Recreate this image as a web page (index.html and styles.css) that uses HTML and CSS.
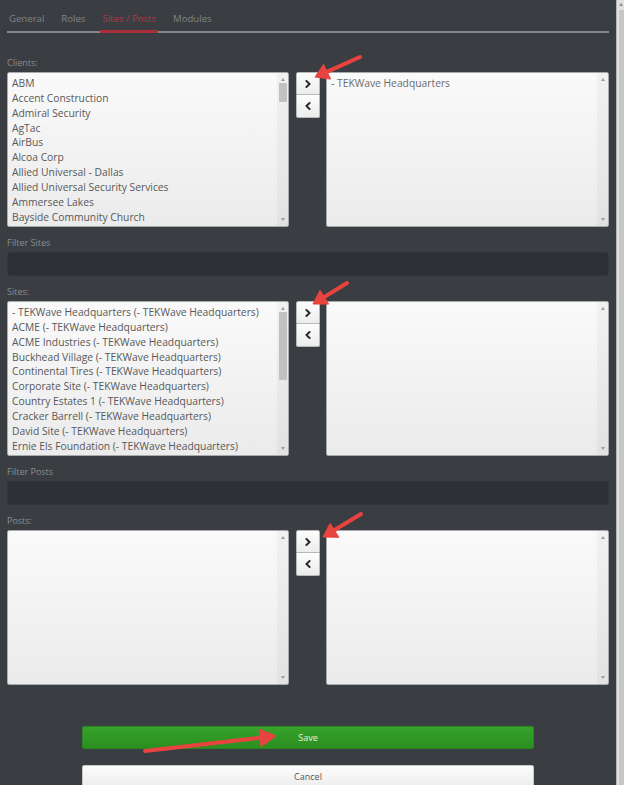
FILE: index.html
```html
<!DOCTYPE html>
<html lang="en">
<head>
<meta charset="utf-8">
<title>User — Sites / Posts</title>
<link rel="stylesheet" href="styles.css">
</head>
<body>
<div class="window">
  <main class="panel">
    <nav class="tabs">
      <a class="tab">General</a>
      <a class="tab">Roles</a>
      <a class="tab active">Sites / Posts</a>
      <a class="tab">Modules</a>
    </nav>

    <section class="picker first">
      <label class="field-label">Clients:</label>
      <div class="dual">
        <div class="listbox">
          <ul class="options">
            <li>ABM</li>
            <li>Accent Construction</li>
            <li>Admiral Security</li>
            <li>AgTac</li>
            <li>AirBus</li>
            <li>Alcoa Corp</li>
            <li>Allied Universal - Dallas</li>
            <li>Allied Universal Security Services</li>
            <li>Ammersee Lakes</li>
            <li>Bayside Community Church</li>
          </ul>
          <div class="vscroll"><span class="arr up"></span><span class="track"><span class="thumb thumb-clients"></span></span><span class="arr down"></span></div>
        </div>
        <div class="movers">
          <button class="mover"><svg width="6" height="8" viewBox="0 0 6 8"><path d="M1.4 1 L4.6 4 L1.4 7" /></svg></button>
          <button class="mover"><svg width="6" height="8" viewBox="0 0 6 8"><path d="M4.6 1 L1.4 4 L4.6 7" /></svg></button>
        </div>
        <div class="listbox">
          <ul class="options selected">
            <li>- TEKWave Headquarters</li>
          </ul>
          <div class="vscroll"><span class="arr up"></span><span class="track"></span><span class="arr down"></span></div>
        </div>
      </div>
    </section>

    <div class="filter">
      <label class="field-label">Filter Sites</label>
      <input class="filter-input" type="text">
    </div>

    <section class="picker">
      <label class="field-label">Sites:</label>
      <div class="dual">
        <div class="listbox">
          <ul class="options">
            <li>- TEKWave Headquarters (- TEKWave Headquarters)</li>
            <li>ACME (- TEKWave Headquarters)</li>
            <li>ACME Industries (- TEKWave Headquarters)</li>
            <li>Buckhead Village (- TEKWave Headquarters)</li>
            <li>Continental Tires (- TEKWave Headquarters)</li>
            <li>Corporate Site (- TEKWave Headquarters)</li>
            <li>Country Estates 1 (- TEKWave Headquarters)</li>
            <li>Cracker Barrell (- TEKWave Headquarters)</li>
            <li>David Site (- TEKWave Headquarters)</li>
            <li>Ernie Els Foundation (- TEKWave Headquarters)</li>
          </ul>
          <div class="vscroll"><span class="arr up"></span><span class="track"><span class="thumb thumb-sites"></span></span><span class="arr down"></span></div>
        </div>
        <div class="movers">
          <button class="mover"><svg width="6" height="8" viewBox="0 0 6 8"><path d="M1.4 1 L4.6 4 L1.4 7" /></svg></button>
          <button class="mover"><svg width="6" height="8" viewBox="0 0 6 8"><path d="M4.6 1 L1.4 4 L4.6 7" /></svg></button>
        </div>
        <div class="listbox">
          <ul class="options"></ul>
          <div class="vscroll"><span class="arr up"></span><span class="track"></span><span class="arr down"></span></div>
        </div>
      </div>
    </section>

    <div class="filter">
      <label class="field-label">Filter Posts</label>
      <input class="filter-input" type="text">
    </div>

    <section class="picker">
      <label class="field-label">Posts:</label>
      <div class="dual">
        <div class="listbox">
          <ul class="options"></ul>
          <div class="vscroll"><span class="arr up"></span><span class="track"></span><span class="arr down"></span></div>
        </div>
        <div class="movers">
          <button class="mover"><svg width="6" height="8" viewBox="0 0 6 8"><path d="M1.4 1 L4.6 4 L1.4 7" /></svg></button>
          <button class="mover"><svg width="6" height="8" viewBox="0 0 6 8"><path d="M4.6 1 L1.4 4 L4.6 7" /></svg></button>
        </div>
        <div class="listbox">
          <ul class="options"></ul>
          <div class="vscroll"><span class="arr up"></span><span class="track"></span><span class="arr down"></span></div>
        </div>
      </div>
    </section>

    <div class="actions">
      <button class="btn save">Save</button>
      <button class="btn cancel">Cancel</button>
    </div>
  </main>

  <div class="page-scroll"><span class="arr up"></span><span class="page-thumb"></span></div>
</div>

<!-- red call-out arrows drawn over the form -->
<svg class="callouts" width="624" height="785" viewBox="0 0 624 785">
  <g class="callout">
    <line x1="360" y1="57" x2="328" y2="71.3"/>
    <polygon points="315,77 330.6,79.1 323.6,64.3"/>
  </g>
  <g class="callout">
    <line x1="347" y1="283" x2="325" y2="296.6"/>
    <polygon points="313,304 328.6,304.1 320,290.2"/>
  </g>
  <g class="callout">
    <line x1="361" y1="514" x2="335" y2="529.7"/>
    <polygon points="323,537 338.8,537.3 330.1,523.3"/>
  </g>
  <g class="callout">
    <line x1="145" y1="751" x2="262" y2="737.6"/>
    <polygon points="276,736 261.1,746.7 259.1,728.9"/>
  </g>
</svg>
</body>
</html>
```

FILE: styles.css
```css
* {
  box-sizing: border-box;
  margin: 0;
  padding: 0;
}

html,
body {
  width: 624px;
  height: 785px;
  overflow: hidden;
}

body {
  position: relative;
  background: #3a3e42;
  font-family: "Open Sans", "Liberation Sans", sans-serif;
  color: #555;
}

.window {
  display: flex;
  height: 785px;
}

.panel {
  flex: 1;
  padding: 0 7px;
}

/* tab strip */
.tabs {
  display: flex;
  gap: 13px;
  padding-top: 12px;
  border-bottom: 2px solid #85888a;
}

.tab {
  font-size: 9.6px;
  line-height: 14px;
  padding: 0 2px 4px;
  margin-bottom: -2px;
  color: #808386;
  border-bottom: 3px solid transparent;
}

.tab.active {
  color: #b43843;
  border-bottom-color: #a93039;
}

/* labels */
.field-label {
  display: block;
  font-size: 9px;
  line-height: 12px;
  color: #8a8d90;
  margin-bottom: 3px;
}

.picker {
  margin-top: 10px;
}

.picker.first {
  margin-top: 24px;
}

.filter {
  margin-top: 10px;
}

.filter-input {
  display: block;
  width: 100%;
  height: 24px;
  background: #2d3034;
  border: 1px solid #313538;
  border-radius: 3px;
  outline: none;
}

/* dual list boxes */
.dual {
  display: grid;
  grid-template-columns: 282px 24px 1fr;
  column-gap: 6.5px;
  align-items: start;
}

.listbox {
  display: flex;
  height: 155px;
  border: 1px solid #a7a9ab;
  border-radius: 2px;
  background: linear-gradient(#fafafa, #ebebeb);
  overflow: hidden;
}

.options {
  flex: 1;
  list-style: none;
  padding: 3px 4px;
  font-size: 10.3px;
  line-height: 14.85px;
  color: #585858;
  white-space: nowrap;
  overflow: hidden;
}

.options.selected {
  color: #6a6a6a;
}

.vscroll {
  width: 11px;
  display: flex;
  flex-direction: column;
  align-items: center;
  padding: 5px 0;
  background: rgba(0, 0, 0, 0.035);
}

.arr {
  width: 0;
  height: 0;
  border-left: 2.5px solid transparent;
  border-right: 2.5px solid transparent;
}

.arr.up {
  border-bottom: 3px solid #9b9b9b;
}

.arr.down {
  border-top: 3px solid #9b9b9b;
}

.track {
  flex: 1;
  width: 100%;
  display: flex;
  justify-content: center;
}

.thumb {
  width: 8px;
  margin-top: 2px;
  background: #c1c1c1;
  border-radius: 1px;
}

.thumb-clients {
  height: 19px;
}

.thumb-sites {
  height: 68px;
}

/* move buttons */
.movers {
  display: flex;
  flex-direction: column;
}

.mover {
  width: 24px;
  height: 23px;
  display: flex;
  align-items: center;
  justify-content: center;
  background: linear-gradient(#fdfdfd, #ececec);
  border: 1px solid #b9b9b9;
  border-radius: 2px 2px 0 0;
}

.mover + .mover {
  border-top: none;
  border-radius: 0 0 2px 2px;
}

.mover path {
  fill: none;
  stroke: #262626;
  stroke-width: 1.9;
  stroke-linecap: round;
  stroke-linejoin: round;
}

/* footer buttons */
.actions {
  margin-top: 41px;
  display: flex;
  flex-direction: column;
  align-items: center;
  gap: 16px;
}

.btn {
  width: 75%;
  height: 23px;
  font-family: "Open Sans", "Liberation Sans", sans-serif;
  font-size: 9px;
  border-radius: 2px;
}

.btn.save {
  background: linear-gradient(#36a22b, #2b8f21);
  border: 1px solid #2a8720;
  color: #e6f2e2;
}

.btn.cancel {
  background: linear-gradient(#fcfcfc, #ededed);
  border: 1px solid #c8c8c8;
  color: #555;
}

/* window scrollbar */
.page-scroll {
  width: 8px;
  display: flex;
  flex-direction: column;
  align-items: center;
  padding-top: 3px;
  background: #e1e1e1;
  border-left: 1px solid #b5b5b5;
}

.page-scroll .arr.up {
  border-bottom-color: #8d8d8d;
}

.page-thumb {
  flex: 1;
  width: 5px;
  margin-top: 4px;
  margin-left: 1px;
  background: #c6c6c6;
}

/* call-outs */
.callouts {
  position: absolute;
  top: 0;
  left: 0;
  pointer-events: none;
}

.callout line {
  stroke: #e8433f;
  stroke-width: 4;
  stroke-linecap: round;
}

.callout polygon {
  fill: #e8433f;
  stroke: #e8433f;
  stroke-width: 1;
  stroke-linejoin: round;
}
```
